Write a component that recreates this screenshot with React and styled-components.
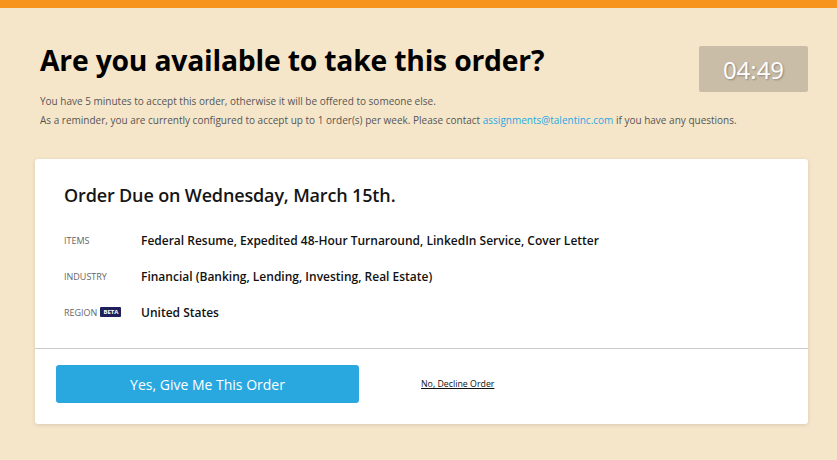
import React from "react";
import styled, { createGlobalStyle } from "styled-components";

const GlobalStyle = createGlobalStyle`
  html, body {
    margin: 0;
    padding: 0;
    background: #f5e6ca;
    font-family: "Open Sans", "Liberation Sans", sans-serif;
  }
`;

const Page = styled.div`
  min-height: 460px;
  background: #f5e6ca;
  border-top: 8px solid #f7941d;
  box-sizing: border-box;
  padding: 0 29px 0 35px;
`;

const Header = styled.div`
  display: flex;
  justify-content: space-between;
  align-items: flex-start;
  padding: 38px 0 0 5px;
`;

const Title = styled.h1`
  margin: 0;
  font-size: 28.3px;
  font-weight: 700;
  color: #000;
  line-height: 28px;
  letter-spacing: -0.2px;
`;

const Timer = styled.div`
  width: 109px;
  height: 46px;
  background: #c9bda8;
  border-radius: 2px;
  color: #fff;
  font-size: 24px;
  font-weight: 500;
  display: flex;
  align-items: center;
  justify-content: center;
  text-shadow: 1px 1px 2px rgba(0, 0, 0, 0.3);
`;

const Notes = styled.div`
  padding-left: 5px;
`;

const Note = styled.p`
  margin: 0;
  font-size: 10px;
  line-height: 19px;
  color: #555;
`;

const MailLink = styled.a`
  color: #29a8e0;
  text-decoration: none;
`;

const Card = styled.div`
  margin-top: 29px;
  background: #fff;
  border-radius: 3px;
  box-shadow: 0 1px 4px rgba(0, 0, 0, 0.12);
  height: 265px;
`;

const CardBody = styled.div`
  padding: 23px 29px 0;
  height: 166px;
  border-bottom: 1px solid #cccccc;
`;

const CardTitle = styled.h2`
  margin: 0 0 14px;
  font-size: 18px;
  font-weight: 600;
  color: #151515;
  line-height: 26px;
  letter-spacing: -0.15px;
`;

const Row = styled.div`
  display: flex;
  align-items: center;
  height: 36px;
`;

const Label = styled.div`
  width: 77px;
  font-size: 9px;
  text-transform: uppercase;
  color: #666;
  display: flex;
  align-items: center;
  gap: 3px;
`;

const Beta = styled.span`
  background: #1f1f5c;
  color: #fff;
  font-size: 6px;
  font-weight: 700;
  padding: 1px 3px;
  border-radius: 1px;
`;

const Value = styled.div`
  font-size: 12px;
  font-weight: 600;
  color: #111;
`;

const Actions = styled.div`
  display: flex;
  align-items: center;
  padding: 16px 21px;
`;

const AcceptButton = styled.button`
  width: 303px;
  height: 38px;
  border: none;
  border-radius: 3px;
  background: #29a8e0;
  color: #fff;
  font-family: inherit;
  font-size: 14px;
  font-weight: 500;
  cursor: pointer;
`;

const DeclineLink = styled.a`
  margin-left: 62px;
  font-size: 8.8px;
  color: #111;
  text-decoration: underline;
  cursor: pointer;
`;

const rows = [
  { label: "Items", value: "Federal Resume, Expedited 48-Hour Turnaround, LinkedIn Service, Cover Letter" },
  { label: "Industry", value: "Financial (Banking, Lending, Investing, Real Estate)" },
  { label: "Region", value: "United States", beta: true },
];

const App = () => {
  return (
    <>
      <GlobalStyle />
      <Page>
        <Header>
          <Title>Are you available to take this order?</Title>
          <Timer>04:49</Timer>
        </Header>
        <Notes>
          <Note>You have 5 minutes to accept this order, otherwise it will be offered to someone else.</Note>
          <Note>
            As a reminder, you are currently configured to accept up to 1 order(s) per week. Please contact{" "}
            <MailLink href="#">assignments@talentinc.com</MailLink> if you have any questions.
          </Note>
        </Notes>
        <Card>
          <CardBody>
            <CardTitle>Order Due on Wednesday, March 15th.</CardTitle>
            {rows.map((row) => (
              <Row key={row.label}>
                <Label>
                  {row.label}
                  {row.beta && <Beta>BETA</Beta>}
                </Label>
                <Value>{row.value}</Value>
              </Row>
            ))}
          </CardBody>
          <Actions>
            <AcceptButton>Yes, Give Me This Order</AcceptButton>
            <DeclineLink>No, Decline Order</DeclineLink>
          </Actions>
        </Card>
      </Page>
    </>
  );
};

export default App;
